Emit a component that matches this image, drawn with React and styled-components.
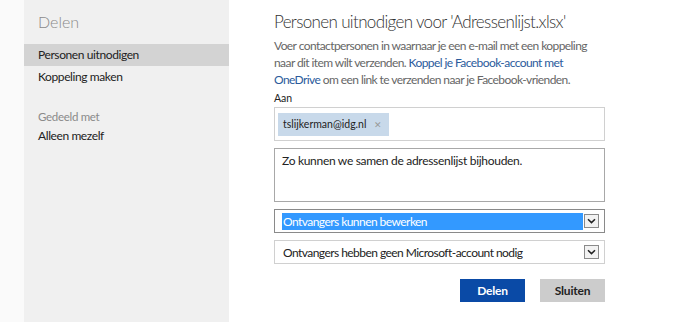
import styled, { createGlobalStyle } from 'styled-components';

const Global = createGlobalStyle`
  html, body { margin: 0; padding: 0; background: #fff; }
  body { font-family: Lato, "Open Sans", sans-serif; color: #222; }
`;

const Page = styled.div`
  display: flex;
  width: 674px;
  height: 322px;
  background: #fff;
  overflow: hidden;
`;

const Gutter = styled.div`
  width: 24px;
  background: #fafafa;
`;

const Sidebar = styled.nav`
  width: 205px;
  background: #f0f0f0;
  display: flex;
  flex-direction: column;
`;

const SideTitle = styled.div`
  font-size: 16px;
  font-weight: 300;
  color: #8a8a8a;
  padding: 11px 0 0 14px;
  height: 33px;
  line-height: 22px;
`;

const SideItem = styled.div`
  height: 22px;
  line-height: 22px;
  padding-left: 14px;
  font-size: 12px;
  letter-spacing: -0.4px;
  color: #222;
  background: ${(p) => (p.active ? '#d3d3d3' : 'transparent')};
`;

const SideLabel = styled.div`
  margin-top: 21px;
  height: 16px;
  line-height: 16px;
  padding-left: 14px;
  font-size: 11.5px;
  letter-spacing: -0.3px;
  color: #8a8a8a;
`;

const Main = styled.main`
  padding: 10px 0 0 45px;
  display: flex;
  flex-direction: column;
  width: 331px;
`;

const Heading = styled.h1`
  margin: 0;
  font-size: 17px;
  font-weight: 300;
  color: #333;
  line-height: 24px;
  letter-spacing: -0.65px;
  white-space: nowrap;
`;

const Intro = styled.p`
  margin: 3px 0 0;
  font-size: 12px;
  line-height: 17px;
  letter-spacing: -0.58px;
  color: #666;
  width: 331px;
`;

const Link = styled.a`
  color: #2b5b9c;
  text-decoration: none;
`;

const Label = styled.div`
  margin-top: 3px;
  font-size: 10.5px;
  line-height: 14px;
  color: #222;
`;

const Field = styled.div`
  box-sizing: border-box;
  width: 331px;
  margin-top: ${(p) => p.gap || 7}px;
  height: ${(p) => p.h}px;
  border: 1px solid ${(p) => p.border || '#d0d0d0'};
  background: #fff;
  display: flex;
  align-items: ${(p) => (p.top ? 'flex-start' : 'center')};
  padding: ${(p) => (p.top ? '3px 7px' : '0 5px 0 7px')};
  font-size: 12px;
  line-height: 17px;
  letter-spacing: ${(p) => (p.top ? '-0.3px' : '-0.55px')};
  color: #222;
`;

const ToField = styled(Field)`
  padding: 0 3px;
`;

const Chip = styled.span`
  display: inline-flex;
  align-items: center;
  gap: 8px;
  height: 23px;
  padding: 0 7px 0 5px;
  background: #c8d9ea;
  font-size: 10.5px;
  letter-spacing: 0;
  color: #222;
`;

const ChipX = styled.span`
  color: #999;
  font-size: 9px;
`;

const SelectText = styled.span`
  flex: 1;
  line-height: 17px;
  padding-left: 1px;
  background: ${(p) => (p.selected ? '#3399ff' : 'transparent')};
  color: ${(p) => (p.selected ? '#fff' : '#222')};
`;

const Arrow = styled.span`
  box-sizing: border-box;
  width: 15px;
  height: 14px;
  margin-left: 1px;
  border: 1px solid #8a8a8a;
  background: #f2f2f2;
  display: flex;
  align-items: center;
  justify-content: center;
`;

const Buttons = styled.div`
  display: flex;
  justify-content: flex-end;
  gap: 15px;
  width: 331px;
  margin-top: 15px;
`;

const Button = styled.button`
  width: 65px;
  height: 23px;
  border: 0;
  padding: 0;
  font-family: inherit;
  font-size: 12px;
  font-weight: 700;
  letter-spacing: -0.2px;
  background: ${(p) => (p.primary ? '#0a4aa6' : '#cccccc')};
  color: ${(p) => (p.primary ? '#fff' : '#222')};
`;

const Chevron = () => (
  <svg width="9" height="6" viewBox="0 0 9 6">
    <path d="M1 1.2 L4.5 4.6 L8 1.2" fill="none" stroke="#222" strokeWidth="1.5" />
  </svg>
);

export default function App() {
  return (
    <Page>
      <Global />
      <Gutter />
      <Sidebar>
        <SideTitle>Delen</SideTitle>
        <SideItem active>Personen uitnodigen</SideItem>
        <SideItem>Koppeling maken</SideItem>
        <SideLabel>Gedeeld met</SideLabel>
        <SideItem>Alleen mezelf</SideItem>
      </Sidebar>
      <Main>
        <Heading>Personen uitnodigen voor 'Adressenlijst.xlsx'</Heading>
        <Intro>
          Voer contactpersonen in waarnaar je een e-mail met een koppeling naar dit item wilt verzenden.{' '}
          <Link>Koppel je Facebook-account met OneDrive</Link> om een link te verzenden naar je Facebook-vrienden.
        </Intro>
        <Label>Aan</Label>
        <ToField h={34} gap={2}>
          <Chip>
            tslijkerman@idg.nl <ChipX>✕</ChipX>
          </Chip>
        </ToField>
        <Field h={54} top border="#a8a8a8">
          Zo kunnen we samen de adressenlijst bijhouden.
        </Field>
        <Field h={24} border="#8a8a8a">
          <SelectText selected>Ontvangers kunnen bewerken</SelectText>
          <Arrow><Chevron /></Arrow>
        </Field>
        <Field h={24}>
          <SelectText>Ontvangers hebben geen Microsoft-account nodig</SelectText>
          <Arrow><Chevron /></Arrow>
        </Field>
        <Buttons>
          <Button primary>Delen</Button>
          <Button>Sluiten</Button>
        </Buttons>
      </Main>
    </Page>
  );
}
